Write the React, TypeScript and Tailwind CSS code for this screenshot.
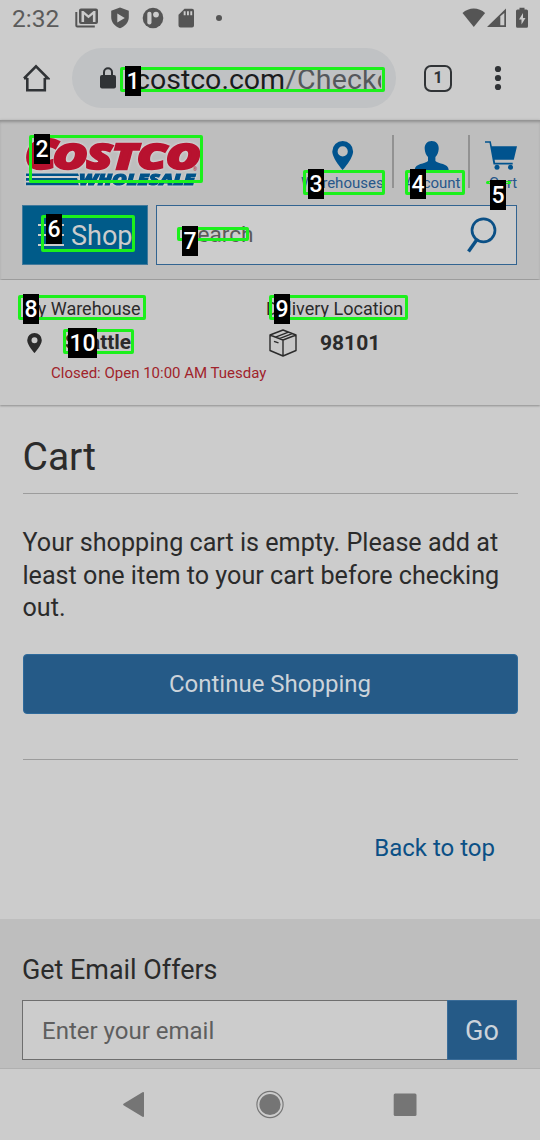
import React from "react";

type MarkProps = { n: number; box: string; tag: string };

function Mark({ n, box, tag }: MarkProps) {
  return (
    <>
      <div className={`absolute rounded-[2px] border-[3px] border-[#1cf01c] ${box}`} />
      <div className={`absolute flex h-[30px] items-center justify-center bg-black ${tag}`}>
        <span className="pt-0.5 text-[23px] leading-7 font-medium text-white">{n}</span>
      </div>
    </>
  );
}

function StatusBar() {
  return (
    <div className="flex h-9 items-center pl-3">
      <span className="w-[62px] pt-px text-[24.5px] leading-9 text-[#5b5b5b]">2:32</span>
      <svg className="h-9 w-[160px]" viewBox="74 0 160 36" fill="#555">
        <path d="M75.300 12h2v13.500h17.500v2H77.300a2 2 0 0 1-2-2z" />
        <path fillRule="evenodd" d="M81 8.500h15a2 2 0 0 1 2 2v11.500a2 2 0 0 1-2 2H81a2 2 0 0 1-2-2V10.500a2 2 0 0 1 2-2zM81.500 22h2.600v-7.500l4.400 3.700 4.400-3.700V22h2.600V11h-2l-5 4.200-5-4.200h-2z" />
        <path fillRule="evenodd" d="M120 7.500l8.800 3.300v6.500c0 5-3.700 9.200-8.800 11-5.100-1.800-8.800-6-8.800-11v-6.500zM117.300 13.500v9l7.500-4.500z" />
        <circle cx="153" cy="18" r="10.300" />
        <rect x="147.300" y="11.800" width="4.200" height="12.800" rx="2" fill="#ccc" />
        <circle cx="156" cy="14.600" r="2.900" fill="#ccc" />
        <path fillRule="evenodd" d="M184.500 8.700h7.500a2 2 0 0 1 2 2v14.700a2 2 0 0 1-2 2h-11.500a2 2 0 0 1-2-2V14.700zM183.700 11.300v4h1.900v-4zm3.300 0v4h1.900v-4zm3.300 0v4h1.900v-4z" />
        <circle cx="219" cy="18" r="3" />
      </svg>
      <svg className="mr-2.5 ml-auto h-9 w-[70px]" viewBox="460 0 70 36" fill="#555">
        <path d="M473.800 27L462.500 13c6.300-6 16.300-6 22.600 0z" />
        <path fillRule="evenodd" d="M487 27L506 8.500V27zM500.300 16.200V25.300h4V13z" />
        <path fillRule="evenodd" d="M519.500 9.500v-1.800h5v1.800h2a1.500 1.500 0 0 1 1.500 1.500v15.200a1.500 1.500 0 0 1-1.500 1.500h-9a1.500 1.500 0 0 1-1.500-1.500V11a1.500 1.500 0 0 1 1.500-1.500zM523 13l-4 6.500h2.500v5l4-6.500H523z" />
      </svg>
    </div>
  );
}

function BrowserBar() {
  return (
    <div className="flex h-21 items-center">
      <svg className="ml-[22px] h-7 w-7" viewBox="22 64 28 28" fill="none" stroke="#303336" strokeWidth="2.600">
        <path d="M27.300 78v12.300h17.500V78M24 78.300L36 66.300l12 12h-3.200M24 78.300h3.300" />
      </svg>
      <div className="ml-[22px] flex h-[60px] w-[324px] items-center rounded-full bg-[#c0c2c4] pl-7">
        <svg className="h-[22px] w-4" viewBox="0 0 16 22">
          <rect x="0" y="8" width="16" height="13.500" rx="2" fill="#303336" />
          <path d="M4 9V5.200a4 4 0 0 1 8 0V9" fill="none" stroke="#303336" strokeWidth="2" />
        </svg>
        <div className="ml-[19px] w-[246px] overflow-hidden pt-[3px] text-[28.500px] leading-10 whitespace-nowrap text-[#1b1c1e]">
          costco.com<span className="tracking-[0.200px] text-[#55585b]">/Checkout</span>
        </div>
      </div>
      <div className="ml-7 flex h-[27px] w-7 items-center justify-center rounded-[7px] border-[2.600px] border-[#303336] text-base font-bold text-[#303336]">1</div>
      <svg className="ml-[42px] h-7 w-2" viewBox="0 0 8 28" fill="#303336">
        <circle cx="4" cy="5" r="3.100" />
        <circle cx="4" cy="14" r="3.100" />
        <circle cx="4" cy="23" r="3.100" />
      </svg>
    </div>
  );
}

function Logo() {
  return (
    <svg className="h-[58px] w-[184px]" viewBox="22 134 184 58" fontFamily="Open Sans, sans-serif" fontWeight="800" fontStyle="italic">
      <g className="drop-shadow-[0_0_1.500px_#e4e4e4]">
        <g fill="#b8122f" stroke="#b8122f" strokeWidth="2.500">
          <text x="25" y="169.200" fontSize="42" textLength="32" lengthAdjust="spacingAndGlyphs">C</text>
          <text x="53" y="169.200" fontSize="34.800" textLength="147" lengthAdjust="spacingAndGlyphs">OSTCO</text>
        </g>
        <path d="M26 173.500h52l1 2.500H26zM26 178h51l1 2.700H26zM26 182.500h52l1 2.700H26z" fill="#005288" />
        <text x="79" y="185.300" fontSize="16" textLength="116" lengthAdjust="spacingAndGlyphs" fill="#005288" stroke="#005288" strokeWidth="1.100">WHOLESALE</text>
      </g>
      <text x="193" y="170.500" fontSize="5" fontStyle="normal" fontWeight="400" fill="#b8122f">®</text>
    </svg>
  );
}

function Header() {
  return (
    <header className="h-[159px] bg-[#bebebe] shadow-[0_1px_3px_rgba(0,0,0,0.350),inset_0_3px_3px_-1px_rgba(0,0,0,0.250)]">
      <div className="flex h-[84.500px] pt-3.5 pl-[22px]">
        <Logo />
        <nav className="ml-[96px] flex text-[15px] text-[#27578a]">
          <div className="mt-px flex h-[53px] w-[92px] flex-col border-r-2 border-[#929292]">
            <svg className="-mt-px ml-[30px] h-[39px] w-[22px] shrink-0" viewBox="332 133 22 39" fill="#00538e">
              <path fillRule="evenodd" d="M342.700 140a10.400 10.400 0 0 1 10.400 10.400c0 7-10.400 18.600-10.400 18.600s-10.400-11.600-10.400-18.600A10.400 10.400 0 0 1 342.700 140zm0 5.300a5.100 5.100 0 1 0 0 10.200 5.100 5.100 0 0 0 0-10.200z" />
            </svg>
            <span className="-mt-px -ml-px leading-[22px]">Warehouses</span>
          </div>
          <div className="mt-px flex h-[53px] w-[76px] flex-col border-r-2 border-[#929292] pl-[11px]">
            <svg className="-mt-px ml-[9px] h-[39px] w-9 shrink-0" viewBox="414 133 36 39" fill="#00538e">
              <path d="M431.700 140c4.500 0 7.400 3.400 7 7.900-.3 3.700-1.500 6.300-3.300 8.100v4c3 3.300 12.800 1.700 13.400 9.300h-34.200c.6-7.600 10.400-6 13.400-9.300v-4c-1.800-1.800-3-4.400-3.300-8.100-.4-4.500 2.500-7.900 7-7.900z" />
            </svg>
            <span className="-mt-px leading-[22px]">Account</span>
          </div>
          <div className="mt-px flex h-[53px] w-[60px] flex-col pl-4">
            <svg className="-mt-px -ml-0.5 h-[39px] w-9 shrink-0" viewBox="484 133 36 39" fill="#00538e">
              <path d="M485 140.300h5.800l1 5H517l-3.200 13.500h-19.200l.5 3h17.600v1.700h-19.200l-4-21.700H485z" />
              <circle cx="497" cy="166.300" r="2.500" />
              <circle cx="510.500" cy="166.300" r="2.500" />
            </svg>
            <span className="-mt-px pl-[3px] leading-[22px]">Cart</span>
          </div>
        </nav>
      </div>
      <div className="flex gap-2 pr-[23px] pl-[22px]">
        <button className="flex h-[60px] w-[125.500px] items-center border border-[#41799b] bg-[#005b89] pl-[15px] text-[27px] text-[#ccc]">
          <svg className="mr-[7px] h-6 w-[26px]" viewBox="0 0 26 24" stroke="#ccc" strokeWidth="2">
            <path d="M0 2h26M0 12h26M0 22h26" />
          </svg>
          <span className="pt-[3px]">Shop</span>
        </button>
        <div className="flex h-[60px] flex-1 items-center justify-between border border-[#326491] bg-[#ccc] pl-[27.500px] text-[22.600px] text-[#5b5b5b]">
          <span className="pt-px">Search</span>
          <svg className="mr-[19px] h-9 w-[30px]" viewBox="468 217 30 36" fill="none" stroke="#0b5086" strokeWidth="2.700">
            <circle cx="484.500" cy="230.300" r="11.500" />
            <path d="M478 239.500l-8.500 12" strokeWidth="3.400" />
          </svg>
        </div>
      </div>
    </header>
  );
}

function Locations() {
  return (
    <section className="mt-px flex h-[125px] bg-[#c8c8c8] pt-[17px] text-[#2b2b2b] shadow-[0_1px_2px_rgba(0,0,0,0.300)]">
      <div className="w-[266px] pl-[22px]">
        <div className="text-[18px] leading-6">My Warehouse</div>
        <div className="mt-2 flex h-7 items-center text-[20.800px] font-bold">
          <svg className="mr-[25px] ml-[5px] h-5 w-[15px]" viewBox="0 0 15 20" fill="#2b2b2b">
            <path fillRule="evenodd" d="M7.500 0A7.300 7.300 0 0 1 14.800 7.200C14.800 12 7.500 20 7.500 20S.2 12 .2 7.200A7.300 7.300 0 0 1 7.500 0zm0 4.200a3 3 0 1 0 0 6 3 3 0 0 0 0-6z" />
          </svg>
          <span className="-ml-0.5">Seattle</span>
        </div>
        <div className="mt-1.5 ml-[29px] text-[15px] leading-5 whitespace-nowrap text-[#a0232b]">Closed: Open 10:00 AM Tuesday</div>
      </div>
      <div>
        <div className="text-[18px] leading-6">Delivery Location</div>
        <div className="mt-2 flex h-7 items-center text-[21px] font-bold">
          <svg className="mr-[23px] ml-[3px] h-7 w-7" viewBox="0 0 28 28" fill="none" stroke="#2b2b2b" strokeWidth="1.400" strokeLinejoin="round">
            <path d="M14 1L27 6v15.500L14 27 1 21.500V6zM1 6l13 5 13-5M14 11v16M6.500 8.200L19.500 3.200M10.300 9.600L23.300 4.600M5 12.300l4.500 1.600" />
          </svg>
          <span className="pt-0.5">98101</span>
        </div>
      </div>
    </section>
  );
}

export default function App() {
  return (
    <div className="relative h-[1140px] w-[540px] overflow-hidden bg-[#ccc] font-['Roboto',sans-serif] text-[#2b2b2b]">
      <StatusBar />
      <BrowserBar />
      <Header />
      <Locations />
      <main className="h-[514px] px-[22.500px] pt-7">
        <h1 className="h-[61px] border-b border-[#9c9c9c] text-[39px] leading-[49px]">Cart</h1>
        <p className="mt-[33px] text-[25.150px] leading-[32.500px]">
          Your shopping cart is empty. Please add at<br />least one item to your cart before checking<br />out.
        </p>
        <button className="mt-[29px] block h-[60px] w-full rounded-[4px] border border-[#2e6a9b] bg-[#255a87] text-[24px] text-[#ccd3da]">Continue Shopping</button>
        <div className="mt-[45px] border-b border-[#9c9c9c]" />
        <div className="mt-[72px] pr-[22.500px] text-right text-[24px] leading-8 text-[#0b5086]">Back to top</div>
      </main>
      <footer className="h-[149px] bg-[#bebebe] pt-[35px] pr-[23px] pl-[22px]">
        <h2 className="h-[46px] text-[26.900px] leading-8">Get Email Offers</h2>
        <div className="flex h-[60px]">
          <div className="flex flex-1 items-center border border-r-0 border-[#6e6e6e] bg-[#ccc] pt-px pl-[19px] text-[24px] text-[#5e5e5e]">Enter your email</div>
          <button className="w-[70px] border border-[#3a6c98] bg-[#255a87] pt-0.5 text-[27px] text-[#ccd3da]">Go</button>
        </div>
      </footer>
      <div className="flex h-[72px] items-center border-t border-[#b0b0b0] bg-[#ccc]">
        <svg className="h-[70px] w-[540px]" viewBox="0 1069.500 540 70" fill="#757575">
          <path d="M144 1093v22.500a1 1 0 0 1-1.500.8l-19-11.600a.9.9 0 0 1 0-1.400l19-11.600a1 1 0 0 1 1.500.8z" />
          <circle cx="270" cy="1104" r="10.600" />
          <circle cx="270" cy="1104" r="13.100" fill="none" stroke="#757575" strokeWidth="1.100" />
          <rect x="393.700" y="1093" width="22.800" height="22.500" rx="1.500" />
        </svg>
      </div>

      <Mark n={1} box="left-[120px] top-[67px] w-[265px] h-[25px]" tag="left-[125px] top-[66px] w-4" />
      <Mark n={2} box="left-[29px] top-[135px] w-[174px] h-[48px]" tag="left-[34px] top-[134px] w-4" />
      <Mark n={3} box="left-[303px] top-[170px] w-[82px] h-[25px]" tag="left-[308px] top-[169px] w-4" />
      <Mark n={4} box="left-[405px] top-[170px] w-[60px] h-[25px]" tag="left-[410px] top-[169px] w-4" />
      <Mark n={5} box="left-[486px] top-[181px] w-[25px] h-[3px] border-y-[1.500px]" tag="left-[490px] top-[180px] w-4" />
      <Mark n={6} box="left-[41px] top-[215px] w-[94px] h-[37px]" tag="left-[46px] top-[214px] w-4" />
      <Mark n={7} box="left-[177px] top-[227px] w-[72px] h-[14px]" tag="left-[182px] top-[226px] w-4" />
      <Mark n={8} box="left-[18px] top-[295px] w-[128px] h-[25px]" tag="left-[23px] top-[294px] w-4" />
      <Mark n={9} box="left-[269px] top-[295px] w-[139px] h-[25px]" tag="left-[274px] top-[294px] w-4" />
      <Mark n={10} box="left-[63px] top-[329px] w-[71px] h-[25px]" tag="left-[68px] top-[328px] w-[29px]" />
    </div>
  );
}
